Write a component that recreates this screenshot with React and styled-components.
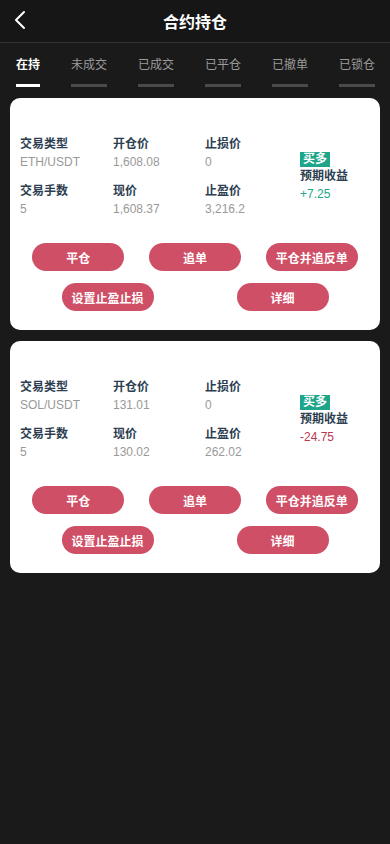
import React from 'react'
import styled, { createGlobalStyle } from 'styled-components'

const GlobalStyle = createGlobalStyle`
  html, body {
    margin: 0;
    padding: 0;
    background: #1a1a1a;
  }
  body {
    font-family: "Liberation Sans", Arial, "Noto Sans CJK SC", sans-serif;
  }
`

const Screen = styled.div`
  width: 390px;
  min-height: 844px;
  background: #1a1a1a;
`

const Header = styled.header`
  height: 42px;
  display: flex;
  align-items: center;
  justify-content: center;
  position: relative;
  border-bottom: 1px solid #333;
  background: #161616;
`

const BackBtn = styled.div`
  position: absolute;
  left: 11px;
  top: 9px;
  width: 18px;
  height: 22px;
`

const Title = styled.h1`
  margin: 0;
  font-size: 16px;
  font-weight: bold;
  color: #fff;
`

const Tabs = styled.nav`
  display: flex;
  gap: 31px;
  padding: 14px 16px 0;
  height: 45px;
  box-sizing: border-box;
`

const Tab = styled.div`
  display: flex;
  flex-direction: column;
  align-items: stretch;
  font-size: 12px;
  line-height: 16px;
  color: ${p => (p.active ? '#fff' : '#9a9a9a')};
  font-weight: ${p => (p.active ? 'bold' : 'normal')};
  white-space: nowrap;

  &::after {
    content: '';
    height: 3px;
    margin-top: 11px;
    background: ${p => (p.active ? '#fff' : '#4a4a4a')};
  }
`

const List = styled.div`
  display: flex;
  flex-direction: column;
  gap: 11px;
  padding: 10px 10px 0;
`

const Card = styled.div`
  background: #fff;
  border-radius: 10px;
  padding: 38px 0 19px;
`

const Info = styled.div`
  display: grid;
  grid-template-columns: 93px 92px 95px 1fr;
  align-items: center;
  padding: 0 10px;
`

const Grid = styled.div`
  grid-column: 1 / 4;
  display: grid;
  grid-template-columns: 93px 92px 95px;
  row-gap: 12px;
`

const Cell = styled.div`
  display: flex;
  flex-direction: column;
`

const Label = styled.span`
  font-size: 12px;
  line-height: 17px;
  font-weight: bold;
  color: #2c3e50;
`

const Value = styled.span`
  font-size: 12px;
  line-height: 18px;
  color: ${p => p.color || '#999'};
`

const Side = styled.div`
  display: flex;
  flex-direction: column;
  align-items: flex-start;
`

const Badge = styled.span`
  background: #1ea58a;
  color: #fff;
  font-size: 12px;
  line-height: 15px;
  padding: 0 3px;
  font-weight: bold;
  margin-bottom: 1px;
`

const Actions = styled.div`
  display: flex;
  justify-content: space-around;
  padding: 0 10px;
  margin-top: ${p => (p.first ? '25px' : '12px')};
`

const Button = styled.button`
  width: 92px;
  height: 28px;
  border: none;
  border-radius: 14px;
  background: #cf4f66;
  color: #fff;
  font-family: inherit;
  font-size: 12px;
  font-weight: bold;
  padding: 0;
`

const tabs = ['在持', '未成交', '已成交', '已平仓', '已撤单', '已锁仓']

const positions = [
  { pair: 'ETH/USDT', open: '1,608.08', stop: '0', qty: '5', price: '1,608.37', take: '3,216.2', pnl: '+7.25', up: true },
  { pair: 'SOL/USDT', open: '131.01', stop: '0', qty: '5', price: '130.02', take: '262.02', pnl: '-24.75', up: false },
]

function PositionCard ({ p }) {
  return (
    <Card>
      <Info>
        <Grid>
          <Cell><Label>交易类型</Label><Value>{p.pair}</Value></Cell>
          <Cell><Label>开仓价</Label><Value>{p.open}</Value></Cell>
          <Cell><Label>止损价</Label><Value>{p.stop}</Value></Cell>
          <Cell><Label>交易手数</Label><Value>{p.qty}</Value></Cell>
          <Cell><Label>现价</Label><Value>{p.price}</Value></Cell>
          <Cell><Label>止盈价</Label><Value>{p.take}</Value></Cell>
        </Grid>
        <Side>
          <Badge>买多</Badge>
          <Label>预期收益</Label>
          <Value color={p.up ? '#1ea58a' : '#b8394f'}>{p.pnl}</Value>
        </Side>
      </Info>
      <Actions first>
        <Button>平仓</Button>
        <Button>追单</Button>
        <Button>平仓并追反单</Button>
      </Actions>
      <Actions>
        <Button>设置止盈止损</Button>
        <Button>详细</Button>
      </Actions>
    </Card>
  )
}

export default function App () {
  return (
    <Screen>
      <GlobalStyle />
      <Header>
        <BackBtn>
          <svg width='18' height='22' viewBox='0 0 18 22'>
            <path d='M13 3 L5 11 L13 19' fill='none' stroke='#fff' strokeWidth='2' strokeLinecap='round' strokeLinejoin='round' />
          </svg>
        </BackBtn>
        <Title>合约持仓</Title>
      </Header>
      <Tabs>
        {tabs.map((t, i) => <Tab key={t} active={i === 0}>{t}</Tab>)}
      </Tabs>
      <List>
        {positions.map(p => <PositionCard key={p.pair} p={p} />)}
      </List>
    </Screen>
  )
}
